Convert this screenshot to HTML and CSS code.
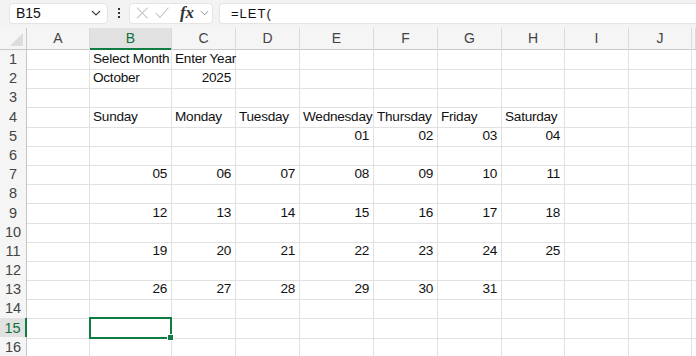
FILE: index.html
```html
<!DOCTYPE html>
<html>
<head>
  <title>Calendar - Book1</title>
  <link rel="stylesheet" href="styles.css">
</head>
<body>
  <div class="formula-bar">
    <div class="name-box">
      <span>B15</span>
      <svg class="chevron" width="10" height="6" viewBox="0 0 10 6"><path d="M1 1l4 4 4-4" fill="none" stroke="#444" stroke-width="1.2"/></svg>
    </div>
    <div class="grip"><i></i><i></i><i></i></div>
    <div class="fx-box">
      <svg width="14" height="14" viewBox="0 0 14 14"><path d="M1 1l12 12M13 1L1 13" stroke="#c4c4c4" stroke-width="1.2"/></svg>
      <svg width="16" height="14" viewBox="0 0 16 14"><path d="M1 7l4.5 5L15 1" fill="none" stroke="#c4c4c4" stroke-width="1.2"/></svg>
      <span class="fx">fx</span>
      <svg class="chevron" width="10" height="6" viewBox="0 0 10 6"><path d="M1 1l4 4 4-4" fill="none" stroke="#8a8a8a" stroke-width="1.1"/></svg>
    </div>
    <div class="formula-input">=LET(</div>
  </div>

  <div class="sheet">
    <div class="row head">
      <div class="corner"></div>
      <div>A</div><div class="sel-col">B</div><div>C</div><div>D</div><div>E</div>
      <div>F</div><div>G</div><div>H</div><div>I</div><div>J</div><div></div>
    </div>
    <div class="row">
      <div class="rh">1</div><div></div><div>Select Month</div><div>Enter Year</div><div></div><div></div><div></div><div></div><div></div><div></div><div></div><div></div>
    </div>
    <div class="row">
      <div class="rh">2</div><div></div><div>October</div><div class="num">2025</div><div></div><div></div><div></div><div></div><div></div><div></div><div></div><div></div>
    </div>
    <div class="row">
      <div class="rh">3</div><div></div><div></div><div></div><div></div><div></div><div></div><div></div><div></div><div></div><div></div><div></div>
    </div>
    <div class="row">
      <div class="rh">4</div><div></div><div>Sunday</div><div>Monday</div><div>Tuesday</div><div>Wednesday</div><div>Thursday</div><div>Friday</div><div>Saturday</div><div></div><div></div><div></div>
    </div>
    <div class="row">
      <div class="rh">5</div><div></div><div></div><div></div><div></div><div class="num">01</div><div class="num">02</div><div class="num">03</div><div class="num">04</div><div></div><div></div><div></div>
    </div>
    <div class="row">
      <div class="rh">6</div><div></div><div></div><div></div><div></div><div></div><div></div><div></div><div></div><div></div><div></div><div></div>
    </div>
    <div class="row">
      <div class="rh">7</div><div></div><div class="num">05</div><div class="num">06</div><div class="num">07</div><div class="num">08</div><div class="num">09</div><div class="num">10</div><div class="num">11</div><div></div><div></div><div></div>
    </div>
    <div class="row">
      <div class="rh">8</div><div></div><div></div><div></div><div></div><div></div><div></div><div></div><div></div><div></div><div></div><div></div>
    </div>
    <div class="row">
      <div class="rh">9</div><div></div><div class="num">12</div><div class="num">13</div><div class="num">14</div><div class="num">15</div><div class="num">16</div><div class="num">17</div><div class="num">18</div><div></div><div></div><div></div>
    </div>
    <div class="row">
      <div class="rh">10</div><div></div><div></div><div></div><div></div><div></div><div></div><div></div><div></div><div></div><div></div><div></div>
    </div>
    <div class="row">
      <div class="rh">11</div><div></div><div class="num">19</div><div class="num">20</div><div class="num">21</div><div class="num">22</div><div class="num">23</div><div class="num">24</div><div class="num">25</div><div></div><div></div><div></div>
    </div>
    <div class="row">
      <div class="rh">12</div><div></div><div></div><div></div><div></div><div></div><div></div><div></div><div></div><div></div><div></div><div></div>
    </div>
    <div class="row">
      <div class="rh">13</div><div></div><div class="num">26</div><div class="num">27</div><div class="num">28</div><div class="num">29</div><div class="num">30</div><div class="num">31</div><div></div><div></div><div></div><div></div>
    </div>
    <div class="row">
      <div class="rh">14</div><div></div><div></div><div></div><div></div><div></div><div></div><div></div><div></div><div></div><div></div><div></div>
    </div>
    <div class="row">
      <div class="rh sel-row">15</div><div></div><div class="active"></div><div></div><div></div><div></div><div></div><div></div><div></div><div></div><div></div><div></div>
    </div>
    <div class="row">
      <div class="rh">16</div><div></div><div></div><div></div><div></div><div></div><div></div><div></div><div></div><div></div><div></div><div></div>
    </div>
  </div>
</body>
</html>
```

FILE: styles.css
```css
body {
  margin: 0;
  width: 696px;
  height: 356px;
  overflow: hidden;
  background: #fff;
  font-family: "Liberation Sans", Arial, sans-serif;
  color: #111;
}
.formula-bar {
  display: flex;
  align-items: center;
  height: 28px;
  padding: 0 0 2px 9px;
  box-sizing: border-box;
  background: #f3f3f3;
}
.name-box, .fx-box, .formula-input {
  display: flex;
  align-items: center;
  height: 21px;
  background: #fff;
  border: 1px solid #e4e4e4;
  border-radius: 4px;
  box-sizing: border-box;
}
.name-box {
  width: 99px;
  padding: 0 6px 0 6px;
  justify-content: space-between;
  font-size: 14px;
}
.grip {
  display: flex;
  flex-direction: column;
  gap: 2px;
  width: 21px;
  align-items: center;
}
.grip i {
  width: 2px;
  height: 2px;
  background: #333;
}
.fx-box {
  width: 84px;
  padding: 0 3px 0 6px;
  gap: 6px;
}
.fx {
  font-family: "Liberation Serif", serif;
  font-style: italic;
  font-weight: bold;
  font-size: 17px;
  color: #333;
  margin-left: 5px;
  line-height: 14px;
}
.formula-input {
  flex: 1;
  margin-left: 6px;
  border-right: none;
  border-radius: 4px 0 0 4px;
  padding-left: 11px;
  font-size: 13px;
  letter-spacing: 1px;
}

.sheet {
  display: flex;
  flex-direction: column;
}
.row {
  display: grid;
  grid-template-columns: 27px 63px 82px 64px 64px 74px 64px 64px 63px 64px 63px 1fr;
  height: 19.2px;
}
.row > div {
  border-right: 1px solid #e1e1e1;
  border-bottom: 1px solid #e1e1e1;
  box-sizing: border-box;
  font-size: 13.6px;
  letter-spacing: -0.25px;
  line-height: 20px;
  padding: 0 4px 0 3px;
  white-space: nowrap;
}
.row > .num {
  text-align: right;
}
.row.head {
  height: 21px;
  background: #f5f5f5;
}
.row.head > div {
  text-align: center;
  font-size: 14px;
  letter-spacing: 0;
  line-height: 20px;
  color: #444;
  border-right: 1px solid #dadada;
  border-bottom: 1px solid #c8c8c8;
  padding: 0;
}
.row.head > .corner {
  position: relative;
  border-right-color: #c8c8c8;
}
.corner::after {
  content: "";
  position: absolute;
  right: 3px;
  bottom: 3px;
  border-left: 13px solid transparent;
  border-bottom: 13px solid #dcdcdc;
}
.row.head > .sel-col {
  background: #e1e1e1;
  color: #0f703b;
  border-bottom: 2px solid #107c41;
}
.row > .rh {
  background: #f5f5f5;
  text-align: center;
  color: #444;
  font-size: 14.5px;
  letter-spacing: 0;
  padding: 0;
  border-right-color: #c8c8c8;
  border-bottom-color: #e0e0e0;
}
.row > .sel-row {
  background: #e1e1e1;
  color: #0f703b;
  border-right: 2px solid #107c41;
}
.row > .active {
  position: relative;
}
.active::after {
  content: "";
  position: absolute;
  left: -1px;
  top: -1px;
  right: -1px;
  bottom: -1px;
  border: 2px solid #107c41;
}
.active::before {
  content: "";
  position: absolute;
  right: -3px;
  bottom: -3px;
  width: 5px;
  height: 5px;
  background: #107c41;
  border: 1px solid #fff;
  z-index: 1;
}
```
